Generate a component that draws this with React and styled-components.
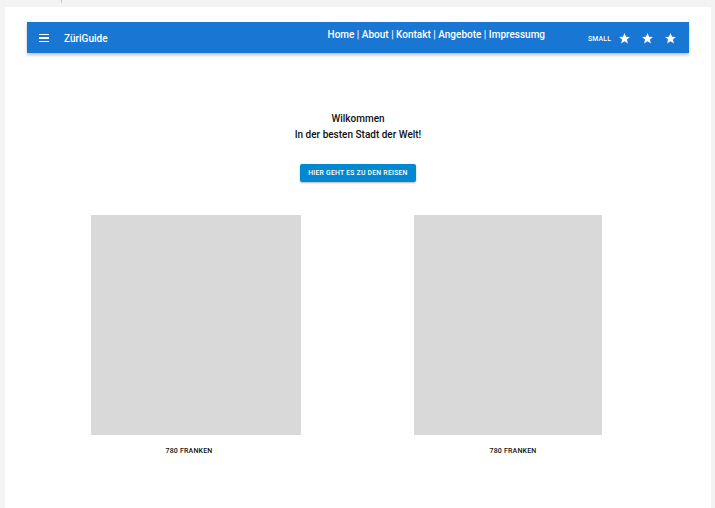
import React from "react";
import styled, { createGlobalStyle } from "styled-components";

const Global = createGlobalStyle`
  html, body { margin: 0; padding: 0; background: #f3f3f3; }
  body { font-family: Roboto, "Liberation Sans", sans-serif; }
`;

const Page = styled.div`
  position: relative;
  margin: 7px 4px 0 5px;
  background: #ffffff;
  min-height: 501px;
  padding: 15px 22px 0 22px;
  box-sizing: border-box;
`;

const Tick = styled.div`
  position: absolute;
  top: -7px;
  left: 56px;
  width: 1px;
  height: 3px;
  background: #c8c8c8;
`;

const AppBar = styled.header`
  height: 31px;
  background: #1976d2;
  color: #fff;
  display: flex;
  align-items: center;
  padding: 0 7px 0 12px;
  box-shadow: 0 2px 3px rgba(0,0,0,0.25);
`;

const MenuButton = styled.div`
  width: 10px;
  display: flex;
  flex-direction: column;
  gap: 2px;
  margin-right: 15px;
  margin-top: 1px;
  span { display: block; height: 1.5px; background: #fff; }
`;

const Brand = styled.div`
  font-size: 10px;
  font-weight: 500;
  margin-top: 2px;
`;

const Nav = styled.nav`
  margin-left: auto;
  font-size: 10px;
  font-weight: 500;
  margin-top: -7px;
  margin-right: 43px;
  white-space: nowrap;
`;

const Small = styled.div`
  font-size: 6.8px;
  font-weight: 500;
  letter-spacing: 0.2px;
  margin-right: 2px;
  margin-top: 2px;
`;

const Star = styled.svg`
  width: 13px;
  height: 13px;
  margin: 2px 5px 0 5px;
`;

const Hero = styled.section`
  display: flex;
  flex-direction: column;
  align-items: center;
  margin-top: 58px;
  color: #111;
`;

const HeroLine = styled.div`
  font-size: 10px;
  font-weight: 500;
  line-height: 16px;
`;

const CTA = styled.button`
  margin-top: 21px;
  height: 18px;
  padding: 0 8px;
  border: none;
  border-radius: 2px;
  background: #0288d1;
  color: #fff;
  font-family: Roboto, "Liberation Sans", sans-serif;
  font-size: 6.8px;
  font-weight: 500;
  letter-spacing: 0.25px;
  box-shadow: 0 1px 2px rgba(0,0,0,0.3);
`;

const Cards = styled.section`
  display: flex;
  margin-top: 33px;
`;

const Card = styled.div`
  width: 324px;
  display: flex;
  flex-direction: column;
`;

const Picture = styled.div`
  margin-left: ${(p) => p.$offset}px;
  width: ${(p) => p.$w}px;
  height: 220px;
  background: #d9d9d9;
`;

const Price = styled.div`
  text-align: center;
  margin-top: 12px;
  font-size: 7px;
  font-weight: 500;
  color: #111;
  letter-spacing: 0.2px;
`;

const StarIcon = () => (
  <Star viewBox="0 0 24 24">
    <path fill="#fff" d="M12 17.27 18.18 21l-1.64-7.03L22 9.24l-7.19-.61L12 2 9.19 8.63 2 9.24l5.46 4.73L5.82 21z" />
  </Star>
);

export default function App() {
  return (
    <>
      <Global />
      <Page>
        <Tick />
        <AppBar>
          <MenuButton><span /><span /><span /></MenuButton>
          <Brand>ZüriGuide</Brand>
          <Nav>Home | About | Kontakt | Angebote | Impressumg</Nav>
          <Small>SMALL</Small>
          <StarIcon />
          <StarIcon />
          <StarIcon />
        </AppBar>
        <Hero>
          <HeroLine>Wilkommen</HeroLine>
          <HeroLine>In der besten Stadt der Welt!</HeroLine>
          <CTA>HIER GEHT ES ZU DEN REISEN</CTA>
        </Hero>
        <Cards>
          <Card>
            <Picture $offset={64} $w={210} />
            <Price>780 FRANKEN</Price>
          </Card>
          <Card>
            <Picture $offset={63} $w={188} />
            <Price>780 FRANKEN</Price>
          </Card>
        </Cards>
      </Page>
    </>
  );
}
